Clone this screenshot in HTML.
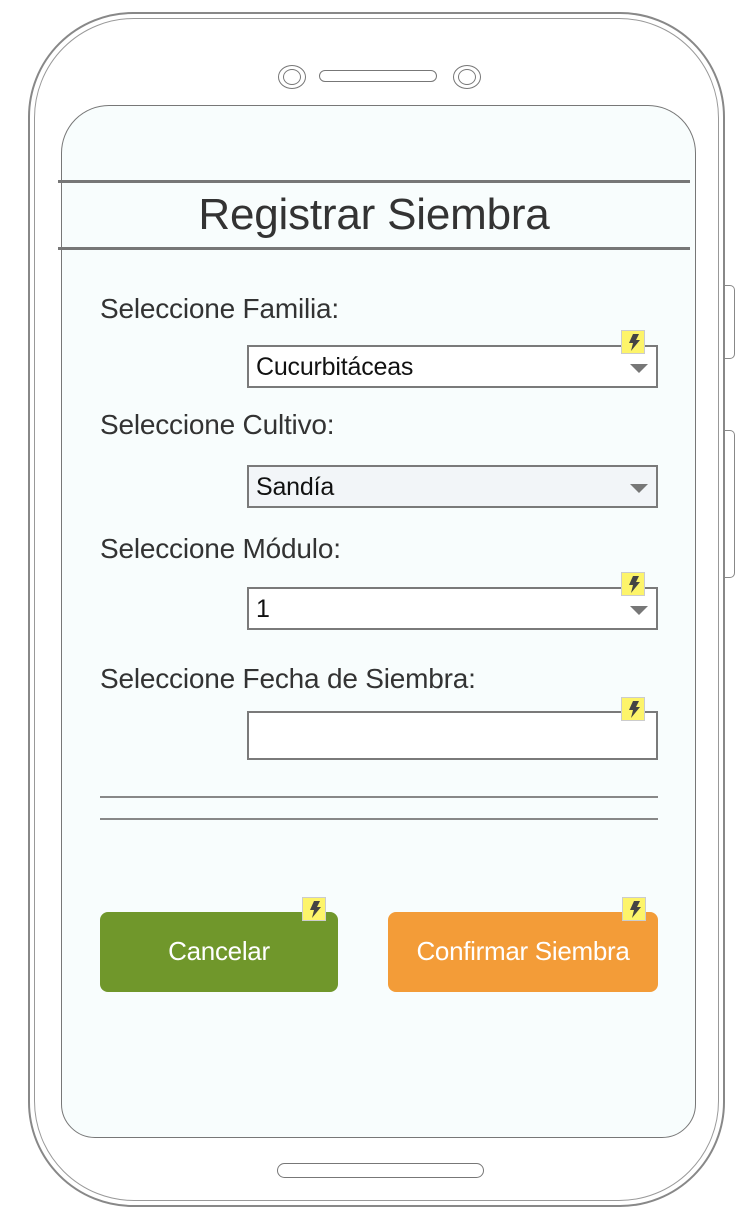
<!DOCTYPE html>
<html><head><meta charset="utf-8"><style>
body{margin:0;width:752px;height:1232px;background:#fff;position:relative;overflow:hidden;font-family:"Liberation Sans",sans-serif}
.a{position:absolute;box-sizing:border-box}
.lbl{position:absolute;left:100px;font-size:28px;color:#333;line-height:30px;letter-spacing:-0.2px}
.sel{position:absolute;box-sizing:border-box;left:247px;width:411px;height:43px;border:2px solid #7a7a7a;background:#fff;font-size:25px;color:#111;padding-left:7px;line-height:40px;letter-spacing:-0.2px}
.arr{position:absolute;right:8px;top:17px;width:0;height:0;border-left:9px solid transparent;border-right:9px solid transparent;border-top:9px solid #777}
.bd{position:absolute;width:24px;height:24px;background:#fdf46a;border:1px solid #ccc;box-sizing:border-box}
.bd svg{position:absolute;left:5px;top:3px}
.btn{position:absolute;top:912px;height:80px;border-radius:8px;color:#fff;font-size:26px;text-align:center;line-height:78px;letter-spacing:-0.3px}
</style></head><body>
<div class="a" style="left:28px;top:12px;width:697px;height:1195px;border:2px solid #888;border-radius:105px"></div>
<div class="a" style="left:34px;top:18px;width:685px;height:1183px;border:1.5px solid #999;border-radius:100px"></div>
<div class="a" style="left:723px;top:285px;width:12px;height:74px;border:1.5px solid #888;border-left:none;border-radius:0 5px 5px 0"></div>
<div class="a" style="left:723px;top:430px;width:12px;height:148px;border:1.5px solid #888;border-left:none;border-radius:0 5px 5px 0"></div>
<div class="a" style="left:278px;top:65px;width:28px;height:24px;border:1.5px solid #777;border-radius:50%"></div>
<div class="a" style="left:283px;top:69px;width:18px;height:16px;border:1.5px solid #777;border-radius:50%"></div>
<div class="a" style="left:453px;top:65px;width:28px;height:24px;border:1.5px solid #777;border-radius:50%"></div>
<div class="a" style="left:458px;top:69px;width:18px;height:16px;border:1.5px solid #777;border-radius:50%"></div>
<div class="a" style="left:319px;top:70px;width:118px;height:12px;border:1.5px solid #777;border-radius:6px"></div>
<div class="a" style="left:61px;top:105px;width:635px;height:1033px;border:1.5px solid #777;border-radius:48px 48px 34px 34px;background:#f8fdfd"></div>
<div class="a" style="left:277px;top:1163px;width:207px;height:15px;border:1.5px solid #777;border-radius:8px"></div>
<div class="a" style="left:58px;top:180px;width:632px;height:3px;background:#777"></div>
<div class="a" style="left:58px;top:247px;width:632px;height:3px;background:#777"></div>
<div class="a" style="left:58px;top:190px;width:632px;text-align:center;font-size:44px;color:#333;line-height:50px;letter-spacing:-0.2px">Registrar Siembra</div>
<div class="lbl" style="top:294px">Seleccione Familia:</div>
<div class="sel" style="top:345px">Cucurbitáceas<div class="arr"></div></div>
<div class="lbl" style="top:410px">Seleccione Cultivo:</div>
<div class="sel" style="top:465px;background:#f2f5f8">Sandía<div class="arr"></div></div>
<div class="lbl" style="top:534px">Seleccione Módulo:</div>
<div class="sel" style="top:587px">1<div class="arr"></div></div>
<div class="lbl" style="top:664px">Seleccione Fecha de Siembra:</div>
<div class="sel" style="top:711px;height:49px"></div>
<div class="a" style="left:100px;top:796px;width:558px;height:2px;background:#888"></div>
<div class="a" style="left:100px;top:818px;width:558px;height:2px;background:#888"></div>
<div class="btn" style="left:100px;width:238px;background:#70972b">Cancelar</div>
<div class="btn" style="left:388px;width:270px;background:#f39c38">Confirmar Siembra</div>
<div class="bd" style="left:621px;top:330px"><svg width="14" height="17" viewBox="0 0 14 17"><path d="M6 0h6L9 6h4L4 17l2-8H2z" fill="#444"/></svg></div>
<div class="bd" style="left:621px;top:572px"><svg width="14" height="17" viewBox="0 0 14 17"><path d="M6 0h6L9 6h4L4 17l2-8H2z" fill="#444"/></svg></div>
<div class="bd" style="left:621px;top:697px"><svg width="14" height="17" viewBox="0 0 14 17"><path d="M6 0h6L9 6h4L4 17l2-8H2z" fill="#444"/></svg></div>
<div class="bd" style="left:302px;top:897px"><svg width="14" height="17" viewBox="0 0 14 17"><path d="M6 0h6L9 6h4L4 17l2-8H2z" fill="#444"/></svg></div>
<div class="bd" style="left:622px;top:897px"><svg width="14" height="17" viewBox="0 0 14 17"><path d="M6 0h6L9 6h4L4 17l2-8H2z" fill="#444"/></svg></div>
</body></html>
